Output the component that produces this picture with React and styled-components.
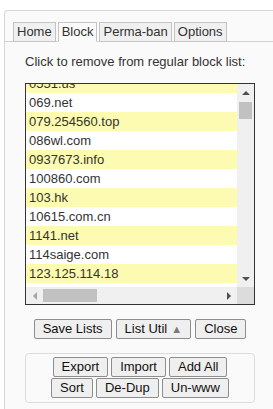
import React from 'react';
import styled, { createGlobalStyle } from 'styled-components';

const GlobalStyle = createGlobalStyle`
  html, body {
    margin: 0;
    padding: 0;
    background: #fff;
    overflow: hidden;
  }
  body {
    font-family: 'Liberation Sans', Arial, sans-serif;
    font-size: 13px;
    color: #333;
  }
`;

const Panel = styled.div`
  box-sizing: border-box;
  margin: 10px 0 0 4px;
  width: 269px;
  height: 399px;
  border: 1px solid #d6d6d6;
  border-right: none;
  border-bottom: none;
  border-radius: 4px 0 0 0;
  background: #fafafa;
`;

const TabBar = styled.div`
  display: flex;
  gap: 2px;
  padding: 11px 0 0 8px;
  border-bottom: 1px solid #d2d2d2;
`;

const Tab = styled.div`
  box-sizing: border-box;
  height: 20px;
  margin-bottom: -1px;
  padding: 0 3px;
  line-height: 18px;
  border: 1px solid #c4c4c4;
  border-bottom-color: ${p => (p.active ? '#fafafa' : '#c4c4c4')};
  background: ${p => (p.active ? '#fafafa' : '#f0f0f0')};
  color: #333;
  cursor: pointer;
`;

const Content = styled.div`
  padding: 12px 0 0 20px;
`;

const Hint = styled.div`
  line-height: 15px;
  color: #333;
`;

const ListBox = styled.div`
  box-sizing: border-box;
  margin-top: 14px;
  width: 230px;
  height: 222px;
  display: grid;
  grid-template-columns: 1fr 17px;
  grid-template-rows: 1fr 17px;
  border: 1px solid #333;
  background: #fff;
`;

const Viewport = styled.div`
  overflow: hidden;
`;

const Rows = styled.div`
  margin-top: -10px;
`;

const Row = styled.div`
  height: 19px;
  line-height: 19px;
  padding-left: 3px;
  white-space: nowrap;
  color: #333;
  background: ${p => (p.odd ? '#fff' : '#fdfbb1')};
`;

const VScroll = styled.div`
  display: flex;
  flex-direction: column;
  background: #f0f0f0;
`;

const HScroll = styled.div`
  display: flex;
  background: #f0f0f0;
`;

const Corner = styled.div`
  background: #dcdcdc;
`;

const ArrowButton = styled.div`
  width: 17px;
  height: 17px;
  flex: none;
  display: flex;
  align-items: center;
  justify-content: center;
`;

const arrowBorders = {
  up: c => `border-left: 4px solid transparent; border-right: 4px solid transparent; border-bottom: 4px solid ${c};`,
  down: c => `border-left: 4px solid transparent; border-right: 4px solid transparent; border-top: 4px solid ${c};`,
  left: c => `border-top: 4px solid transparent; border-bottom: 4px solid transparent; border-right: 4px solid ${c};`,
  right: c => `border-top: 4px solid transparent; border-bottom: 4px solid transparent; border-left: 4px solid ${c};`,
};

const Arrow = styled.span`
  width: 0;
  height: 0;
  ${p => arrowBorders[p.dir](p.disabled ? '#a3a3a3' : '#505050')}
`;

const Track = styled.div`
  flex: 1;
  display: flex;
  flex-direction: ${p => (p.vertical ? 'column' : 'row')};
`;

const Thumb = styled.div`
  background: #c1c1c1;
  ${p =>
    p.vertical
      ? 'margin: 1px 2px 0 2px; height: 17px;'
      : 'margin: 2px 0; width: 54px;'}
`;

const ButtonBar = styled.div`
  margin-top: 14px;
  width: 230px;
  display: flex;
  justify-content: center;
  gap: 4px;
`;

const Button = styled.button`
  box-sizing: border-box;
  height: 20px;
  padding: 0 8px;
  border: 1px solid #8d8d8d;
  border-radius: 2px;
  background: #efefef;
  font-family: 'Liberation Sans', Arial, sans-serif;
  font-size: 13px;
  line-height: 18px;
  color: #111;
  cursor: pointer;
`;

const Caret = styled.span`
  font-size: 11px;
  color: #7a7a7a;
  margin-left: 4px;
`;

const UtilBox = styled.div`
  box-sizing: border-box;
  margin-top: 14px;
  width: 230px;
  padding: 3px 0 4px;
  border: 1px solid #dcdcdc;
  border-radius: 4px;
  display: flex;
  flex-direction: column;
  gap: 1px;
`;

const UtilRow = styled.div`
  display: flex;
  justify-content: center;
  gap: 3px;
`;

const tabs = ['Home', 'Block', 'Perma-ban', 'Options'];

const sites = [
  '0551.us',
  '069.net',
  '079.254560.top',
  '086wl.com',
  '0937673.info',
  '100860.com',
  '103.hk',
  '10615.com.cn',
  '1141.net',
  '114saige.com',
  '123.125.114.18',
  '1233.cn',
];

const App = () => (
  <>
    <GlobalStyle />
    <Panel>
      <TabBar>
        {tabs.map(t => (
          <Tab key={t} active={t === 'Block'}>
            {t}
          </Tab>
        ))}
      </TabBar>
      <Content>
        <Hint>Click to remove from regular block list:</Hint>
        <ListBox>
          <Viewport>
            <Rows>
              {sites.map((s, i) => (
                <Row key={s} odd={i % 2 === 1}>
                  {s}
                </Row>
              ))}
            </Rows>
          </Viewport>
          <VScroll>
            <ArrowButton>
              <Arrow dir="up" />
            </ArrowButton>
            <Track vertical>
              <Thumb vertical />
            </Track>
            <ArrowButton>
              <Arrow dir="down" />
            </ArrowButton>
          </VScroll>
          <HScroll>
            <ArrowButton>
              <Arrow dir="left" disabled />
            </ArrowButton>
            <Track>
              <Thumb />
            </Track>
            <ArrowButton>
              <Arrow dir="right" />
            </ArrowButton>
          </HScroll>
          <Corner />
        </ListBox>
        <ButtonBar>
          <Button>Save Lists</Button>
          <Button>
            List Util<Caret>▲</Caret>
          </Button>
          <Button>Close</Button>
        </ButtonBar>
        <UtilBox>
          <UtilRow>
            <Button>Export</Button>
            <Button>Import</Button>
            <Button>Add All</Button>
          </UtilRow>
          <UtilRow>
            <Button>Sort</Button>
            <Button>De-Dup</Button>
            <Button>Un-www</Button>
          </UtilRow>
        </UtilBox>
      </Content>
    </Panel>
  </>
);

export default App;
